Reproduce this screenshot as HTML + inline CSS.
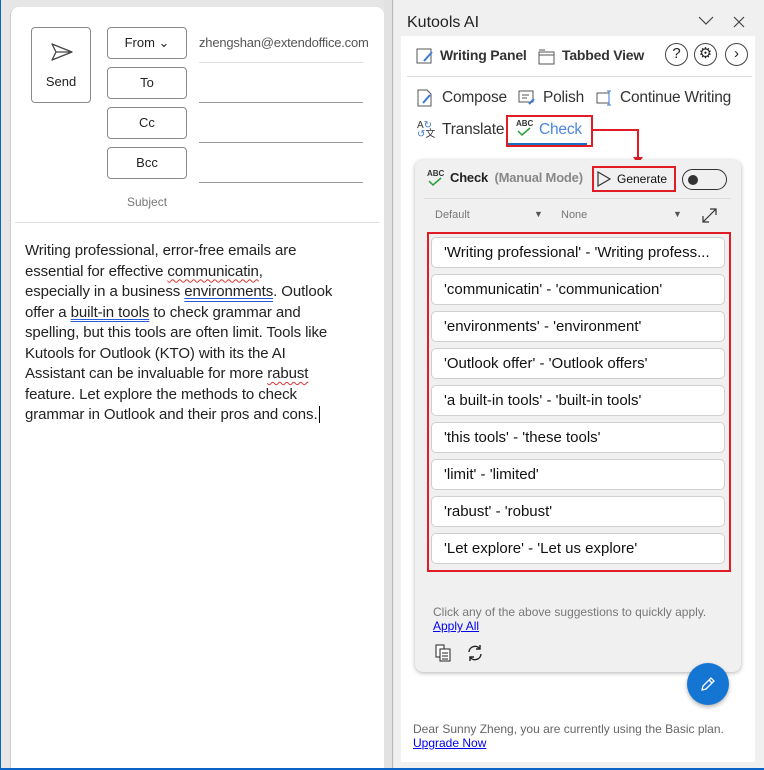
<!DOCTYPE html>
<html><head><meta charset="utf-8"><style>
*{margin:0;padding:0;box-sizing:border-box}
body{width:764px;height:770px;position:relative;overflow:hidden;background:#e6e6e6;font-family:"Liberation Sans",sans-serif;color:#222}
.a{position:absolute}
.btn{position:absolute;background:#fff;border:1px solid #8a8a8a;border-radius:4px;font-size:13px;text-align:center;color:#222}
.line{position:absolute;height:1px;background:#9a9a9a;left:199px;width:164px}
.item{position:absolute;left:431px;width:294px;height:31px;background:#fff;border:1px solid #d0d0d0;border-radius:5px;font-size:15px;line-height:29px;padding-left:12px;white-space:nowrap;overflow:hidden;color:#111}
.tb{position:absolute;font-size:15.5px;color:#333;letter-spacing:-0.2px}
.sq{text-decoration:underline wavy #d33;text-decoration-thickness:1px;text-underline-offset:3px}
.bl{text-decoration:underline double #2a5bd7;text-underline-offset:2px}
a{color:#00e;text-decoration:underline}
</style></head><body>
<!-- left card -->
<div class="a" style="left:10px;top:7px;width:374px;height:763px;background:#fff;border-radius:8px 8px 0 0;border-left:1px solid #ccc"></div>
<div class="a" style="left:384px;top:0;width:9px;height:768px;background:#e2e2e2;border-right:1px solid #bbb"></div>
<div class="btn" style="left:31px;top:27px;width:60px;height:76px">
<svg class="a" style="left:18px;top:14px" width="24" height="20" viewBox="0 0 24 20"><path d="M2 2 L22 10 L2 18 L6 10 Z M6 10 H22" fill="none" stroke="#444" stroke-width="1.3" stroke-linejoin="round"/></svg>
<div class="a" style="left:0;top:46px;width:58px">Send</div></div>
<div class="btn" style="left:107px;top:27px;width:80px;height:32px;line-height:30px">From &#8964;</div>
<div class="btn" style="left:107px;top:67px;width:80px;height:32px;line-height:30px">To</div>
<div class="btn" style="left:107px;top:107px;width:80px;height:32px;line-height:30px">Cc</div>
<div class="btn" style="left:107px;top:147px;width:80px;height:32px;line-height:30px">Bcc</div>
<div class="a" style="left:199px;top:35px;font-size:13px;color:#555;letter-spacing:-0.2px">zhengshan@extendoffice.com</div>
<div class="line" style="top:62px;background:#ddd"></div>
<div class="line" style="top:102px"></div>
<div class="line" style="top:142px"></div>
<div class="line" style="top:182px"></div>
<div class="a" style="left:127px;top:195px;font-size:12px;color:#777">Subject</div>
<div class="a" style="left:15px;top:222px;width:364px;height:1px;background:#ddd"></div>
<div class="a" style="left:25px;top:241px;width:360px;font-size:15px;line-height:20.5px;color:#222;white-space:nowrap;letter-spacing:-0.1px">Writing professional, error-free emails are<br>essential for effective <span class="sq">communicatin</span>,<br>especially in a business <span class="bl">environments</span>. Outlook<br>offer a <span class="bl">built-in tools</span> to check grammar and<br>spelling, but this tools are often limit. Tools like<br>Kutools for Outlook (KTO) with its the AI<br>Assistant can be invaluable for more <span class="sq">rabust</span><br>feature. Let explore the methods to check<br>grammar in Outlook and their pros and cons.<span style="border-left:1px solid #000;margin-left:1px"></span></div>
<!-- right panel -->
<div class="a" style="left:394px;top:0;width:370px;height:768px;background:#f0f0f0"></div>
<div class="a" style="left:407px;top:14px;font-size:16px;color:#222">Kutools AI</div>
<svg class="a" style="left:698px;top:16px" width="16" height="10"><path d="M1 1 L8 8 L15 1" fill="none" stroke="#444" stroke-width="1.2"/></svg>
<svg class="a" style="left:733px;top:16px" width="12" height="12"><path d="M1 1 L11 11 M11 1 L1 11" stroke="#444" stroke-width="1.2"/></svg>
<div class="a" style="left:401px;top:36px;width:354px;height:726px;background:#fff"></div>
<svg class="a" style="left:416px;top:47px" width="18" height="18"><rect x="1" y="2" width="14" height="14" fill="none" stroke="#555"/><path d="M8 14 L16 5" stroke="#3a7bd5" stroke-width="2"/></svg>
<div class="a" style="left:440px;top:47px;font-size:14px;font-weight:bold;color:#333;letter-spacing:-0.2px">Writing Panel</div>
<svg class="a" style="left:538px;top:49px" width="18" height="16"><rect x="1" y="3" width="15" height="12" fill="none" stroke="#555"/><path d="M1 6 H16 M1 1 H7" stroke="#555"/></svg>
<div class="a" style="left:562px;top:47px;font-size:14px;font-weight:bold;color:#333;letter-spacing:-0.2px">Tabbed View</div>
<div class="a" style="left:665px;top:43px;width:23px;height:23px;border:1.5px solid #444;border-radius:50%;text-align:center;font-size:15px;line-height:20px">?</div>
<div class="a" style="left:694px;top:43px;width:23px;height:23px;border:1.5px solid #444;border-radius:50%;text-align:center;font-size:15px;line-height:20px">&#9881;</div>
<div class="a" style="left:725px;top:43px;width:23px;height:23px;border:1.5px solid #444;border-radius:50%;text-align:center;font-size:15px;line-height:19px">&#8250;</div>
<div class="a" style="left:407px;top:76px;width:345px;height:1px;background:#ddd"></div>
<svg class="a" style="left:416px;top:89px" width="18" height="18"><path d="M2 1 H11 L15 5 V17 H2 Z" fill="none" stroke="#555"/><path d="M7 14 L14 6" stroke="#3a7bd5" stroke-width="2"/></svg>
<div class="tb" style="left:442px;top:89px">Compose</div>
<svg class="a" style="left:518px;top:90px" width="18" height="16"><rect x="1" y="1" width="14" height="11" fill="none" stroke="#555"/><path d="M4 5H11M4 8H9" stroke="#555"/><path d="M11 14L16 9" stroke="#3a7bd5" stroke-width="2"/></svg>
<div class="tb" style="left:543px;top:89px">Polish</div>
<svg class="a" style="left:596px;top:90px" width="20" height="16"><rect x="1" y="3" width="12" height="10" fill="none" stroke="#555"/><path d="M13 1V15M11 1H15M11 15H15" stroke="#3a7bd5"/></svg>
<div class="tb" style="left:620px;top:89px">Continue Writing</div>
<div class="a" style="left:417px;top:121px;font-size:10px;color:#333;line-height:9px">A<span style="color:#3a7bd5">&#8635;</span><br><span style="color:#3a7bd5">&#8634;</span>文</div>
<div class="tb" style="left:442px;top:121px">Translate</div>
<div class="a" style="left:506px;top:115px;width:87px;height:32px;border:2px solid #e01c24"></div>
<div class="a" style="left:516px;top:119px;font-size:8px;font-weight:bold;color:#333">ABC</div>
<svg class="a" style="left:516px;top:127px" width="16" height="10"><path d="M2 4 L6 8 L14 1" fill="none" stroke="#2a9d3a" stroke-width="1.5"/></svg>
<div class="tb" style="left:539px;top:121px;color:#4a86e0">Check</div>
<div class="a" style="left:508px;top:143px;width:79px;height:2px;background:#1a6fc4"></div>
<!-- arrow -->
<div class="a" style="left:593px;top:129px;width:45px;height:2px;background:#e01c24"></div>
<div class="a" style="left:637px;top:129px;width:2px;height:30px;background:#e01c24"></div>
<div class="a" style="left:633px;top:157px;border-left:5px solid transparent;border-right:5px solid transparent;border-top:7px solid #e01c24"></div>
<!-- check card -->
<div class="a" style="left:415px;top:160px;width:326px;height:512px;background:#f0f0f0;border-radius:8px;box-shadow:0 1px 4px rgba(0,0,0,.3)"></div>
<div class="a" style="left:427px;top:169px;font-size:8px;font-weight:bold;color:#333">ABC</div>
<svg class="a" style="left:427px;top:177px" width="16" height="10"><path d="M2 4 L6 8 L14 1" fill="none" stroke="#2a9d3a" stroke-width="1.5"/></svg>
<div class="a" style="left:450px;top:170px;font-size:13px;font-weight:bold;color:#222;letter-spacing:-0.2px">Check <span style="color:#888;margin-left:3px">(Manual Mode)</span></div>
<div class="a" style="left:592px;top:166px;width:84px;height:26px;border:2px solid #e01c24"></div>
<svg class="a" style="left:597px;top:171px" width="14" height="16"><path d="M1 1 L13 8 L1 15 Z" fill="none" stroke="#333" stroke-width="1.2"/></svg>
<div class="a" style="left:617px;top:172px;font-size:12px;color:#111">Generate</div>
<div class="a" style="left:682px;top:169px;width:45px;height:21px;border:1.5px solid #333;border-radius:11px"></div>
<div class="a" style="left:688px;top:175px;width:10px;height:10px;border-radius:50%;background:#333"></div>
<div class="a" style="left:424px;top:198px;width:307px;height:1px;background:#ddd"></div>
<div class="a" style="left:435px;top:209px;font-size:11px;color:#777">Default</div>
<div class="a" style="left:534px;top:209px;font-size:9px;color:#555">&#9660;</div>
<div class="a" style="left:561px;top:209px;font-size:11px;color:#777">None</div>
<div class="a" style="left:673px;top:209px;font-size:9px;color:#555">&#9660;</div>
<svg class="a" style="left:701px;top:207px" width="17" height="17"><path d="M2 15 L15 2 M9 2H15V8 M2 9V15H8" fill="none" stroke="#333" stroke-width="1.2"/></svg>
<div class="a" style="left:427px;top:232px;width:304px;height:340px;border:2px solid #e01c24"></div>
<div class="item" style="top:237px">'Writing professional' - 'Writing profess...</div>
<div class="item" style="top:274px">'communicatin' - 'communication'</div>
<div class="item" style="top:311px">'environments' - 'environment'</div>
<div class="item" style="top:348px">'Outlook offer' - 'Outlook offers'</div>
<div class="item" style="top:385px">'a built-in tools' - 'built-in tools'</div>
<div class="item" style="top:422px">'this tools' - 'these tools'</div>
<div class="item" style="top:459px">'limit' - 'limited'</div>
<div class="item" style="top:496px">'rabust' - 'robust'</div>
<div class="item" style="top:533px">'Let explore' - 'Let us explore'</div>
<div class="a" style="left:433px;top:605px;font-size:12px;color:#777;line-height:14px">Click any of the above suggestions to quickly apply.<br><a>Apply All</a></div>
<svg class="a" style="left:435px;top:644px" width="18" height="18"><rect x="1" y="1" width="8" height="12" fill="#fff" stroke="#222"/><rect x="5" y="5" width="10" height="12" fill="#fff" stroke="#222"/><path d="M7 9H13M7 12H13M7 15H13" stroke="#222"/></svg>
<svg class="a" style="left:466px;top:644px" width="18" height="18"><path d="M3 8 A6 6 0 0 1 14 5 M15 10 A6 6 0 0 1 4 13" fill="none" stroke="#222" stroke-width="1.4"/><path d="M14 1V5H10 M4 17V13H8" fill="none" stroke="#222" stroke-width="1.4"/></svg>
<div class="a" style="left:687px;top:663px;width:42px;height:42px;border-radius:50%;background:#1476d2;box-shadow:0 2px 4px rgba(0,0,0,.3)"></div>
<svg class="a" style="left:699px;top:675px" width="18" height="18"><path d="M3 15 L4 11 L12 3 L15 6 L7 14 Z M10 5 L13 8" fill="none" stroke="#fff" stroke-width="1.3"/></svg>
<div class="a" style="left:413px;top:722px;font-size:12px;color:#666;line-height:14px">Dear Sunny Zheng, you are currently using the Basic plan.<br><a>Upgrade Now</a></div>
<div class="a" style="left:0;top:0;width:1px;height:770px;background:#0a64c8"></div>
<div class="a" style="left:0;top:768px;width:764px;height:2px;background:#0a64c8"></div>
</body></html>
